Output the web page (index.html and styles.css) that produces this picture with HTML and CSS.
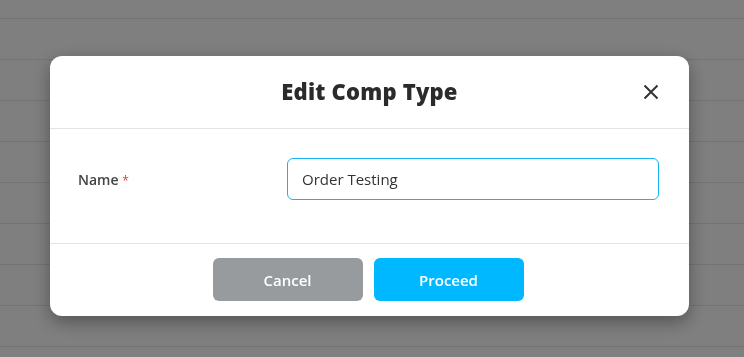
FILE: index.html
```html
<html>
    <head>
        <title>Edit Comp Type</title>
        <link rel="stylesheet" href="styles.css">
    </head>
    <body>
        <div class="liste">
            <div class="ligne premiere"></div>
            <div class="ligne"></div>
            <div class="ligne"></div>
            <div class="ligne"></div>
            <div class="ligne"></div>
            <div class="ligne"></div>
            <div class="ligne"></div>
            <div class="ligne"></div>
            <div class="ligne"></div>
        </div>

        <div class="voile">
            <div class="fenetre">
                <div class="entete">
                    <h2 class="titre">Edit Comp Type</h2>
                    <button class="fermer" aria-label="Close">
                        <svg width="16" height="16" viewBox="0 0 16 16">
                            <path d="M1.5 1.5 L14.5 14.5 M14.5 1.5 L1.5 14.5" stroke="#333" stroke-width="2" fill="none"/>
                        </svg>
                    </button>
                </div>
                <div class="corps">
                    <label class="etiquette" for="nom">Name <span class="requis">*</span></label>
                    <input class="champ" id="nom" type="text" value="Order Testing">
                </div>
                <div class="pied">
                    <button class="bouton annuler">Cancel</button>
                    <button class="bouton valider">Proceed</button>
                </div>
            </div>
        </div>
    </body>
</html>
```

FILE: styles.css
```css
*{
    margin: 0;
    padding: 0;
    box-sizing: border-box;
}
body{
    margin: 0;
    background: #fff;
    font-family: "Open Sans", "Liberation Sans", sans-serif;
    overflow: hidden;
}

/* fond : lignes du tableau derriere */
.liste{
    width: 100%;
}
.ligne{
    height: 41px;
    border-bottom: 1px solid #e6e6e6;
}
.ligne.premiere{
    height: 19px;
}

.voile{
    position: fixed;
    top: 0;
    left: 0;
    width: 100vw;
    height: 100vh;
    background: rgba(0, 0, 0, 0.5);
    padding-top: 56px;
    padding-left: 50px;
}

.fenetre{
    width: 639px;
    background: #fff;
    border-radius: 12px;
    box-shadow: 0 6px 18px rgba(0, 0, 0, 0.35);
}

.entete{
    height: 73px;
    border-bottom: 1px solid #e3e3e3;
    display: flex;
    align-items: center;
    justify-content: center;
    position: relative;
}
.titre{
    font-size: 22px;
    font-weight: 800;
    color: #2b2b2b;
    margin-top: -2px;
    letter-spacing: 0.2px;
}
.fermer{
    position: absolute;
    right: 30px;
    top: 28px;
    background: transparent;
    border: none;
    width: 16px;
    height: 16px;
    cursor: pointer;
}
.fermer svg{
    display: block;
}

.corps{
    display: grid;
    grid-template-columns: 209px 1fr;
    align-items: center;
    padding: 29px 30px 43px 28px;
    border-bottom: 1px solid #e3e3e3;
}
.etiquette{
    font-size: 14px;
    font-weight: 600;
    color: #444;
}
.requis{
    color: #e53935;
    font-size: 12px;
    font-weight: 400;
}
.champ{
    height: 42px;
    width: 100%;
    border: 1px solid #14b4f0;
    border-radius: 6px;
    padding: 0 14px;
    font-family: "Open Sans", "Liberation Sans", sans-serif;
    font-size: 15px;
    color: #333;
    outline: none;
}

.pied{
    display: flex;
    justify-content: center;
    gap: 11px;
    padding: 14px 3px 15px 0;
}
.bouton{
    width: 150px;
    height: 43px;
    border: none;
    border-radius: 6px;
    color: #fff;
    font-family: "Open Sans", "Liberation Sans", sans-serif;
    font-size: 15px;
    font-weight: 600;
    cursor: pointer;
}
.annuler{
    background: #979b9d;
}
.valider{
    background: #00b8ff;
}
```
